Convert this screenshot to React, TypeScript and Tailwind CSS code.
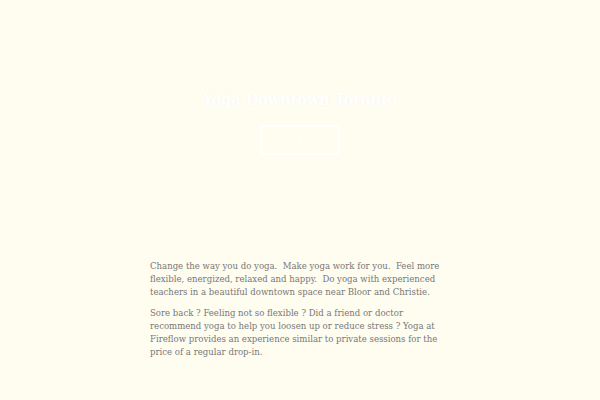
import React from "react";

export default function App() {
  return (
    <div className="w-[600px] h-[400px] overflow-hidden bg-[#fffdf0]" style={{ fontFamily: '"DejaVu Serif Condensed", "DejaVu Serif", serif' }}>
      <div className="h-[240px] flex flex-col items-center pt-[88px]">
        <h1 className="text-white font-bold text-[16px] leading-[24px] [text-shadow:0_0_2px_rgba(0,0,0,0.04)]">
          Yoga Downtown Toronto
        </h1>
        <div className="mt-[13px] w-[80px] h-[30px] border-2 border-white flex items-center justify-center text-white text-[9px]">
          ≡
        </div>
      </div>
      <div className="w-[300px] mx-auto pt-[19px] text-[9.5px] leading-[13px] text-[#777]">
        <p>Change the way you do yoga.&nbsp; Make yoga work for you.&nbsp; Feel more flexible, energized, relaxed and happy.&nbsp; Do yoga with experienced teachers in a beautiful downtown space near Bloor and Christie.</p>
        <p className="mt-[8px]">Sore back ? Feeling not so flexible ? Did a friend or doctor recommend yoga to help you loosen up or reduce stress ? Yoga at Fireflow provides an experience similar to private sessions for the price of a regular drop-in.</p>
      </div>
    </div>
  );
}
